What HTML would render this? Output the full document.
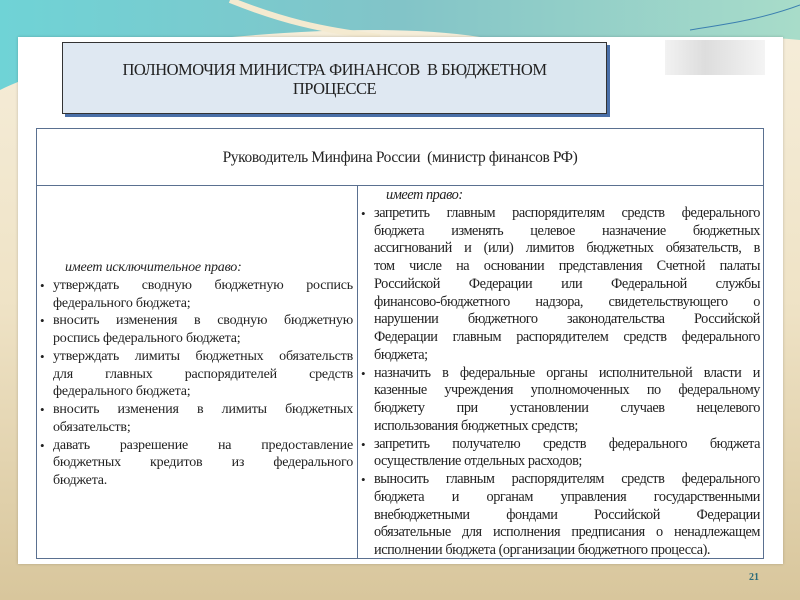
<!DOCTYPE html>
<html><head><meta charset="utf-8"><style>
*{margin:0;padding:0;box-sizing:border-box}
body{width:800px;height:600px;overflow:hidden;position:relative;font-family:"Liberation Serif",serif;color:#222;
background:linear-gradient(180deg,#f6eedb 0%,#efe3c6 50%,#d8c69c 100%);}
.panel{position:absolute;left:18px;top:37px;width:765px;height:527px;background:#fff;box-shadow:0 0 3px rgba(0,0,0,.2)}
.title{position:absolute;left:62px;top:42px;width:545px;height:72px;background:#dfe8f2;border:1px solid #333;box-shadow:3px 3px 0 #4a6fa8;text-align:center;font-size:16.5px;line-height:19px;padding-top:17px;letter-spacing:-.5px}
.logo{position:absolute;left:665px;top:40px;width:100px;height:35px;background:linear-gradient(90deg,#f2f2f2,#ddd 40%,#e8e8e8 70%,#f4f4f4)}
.tbl{position:absolute;left:36px;top:128px;width:728px;height:431px;border:1px solid #5a7090}
.hd{position:absolute;left:0;top:0;width:726px;height:57px;border-bottom:1px solid #5a7090;text-align:center;line-height:57px;font-size:15.5px;letter-spacing:-.4px}
.l{position:absolute;left:0;top:130px;width:320px;font-size:14px;letter-spacing:-.2px;padding-right:4px}
.div{position:absolute;left:320px;top:57px;width:1px;height:373px;background:#5a7090}
.r{position:absolute;left:321px;top:58px;width:405px;font-size:14.3px;letter-spacing:-.45px;padding-right:3px}
.ln{line-height:17.75px;text-align:justify;text-align-last:justify;white-space:nowrap;padding-left:16px;position:relative}
.e{text-align-last:left}
.b::before{content:"•";position:absolute;left:3px;font-size:13px}
.i{font-style:italic;padding-left:28px;text-align-last:left}
.num{position:absolute;left:749px;top:572px;font-size:10px;font-weight:bold;color:#2a6a7a}
</style></head><body>
<svg style="position:absolute;left:0;top:0" width="800" height="120">
<defs><linearGradient id="g" x1="0" x2="1"><stop offset="0" stop-color="#6fd3d6"/><stop offset=".5" stop-color="#82c4c8"/><stop offset="1" stop-color="#a8dcc9"/></linearGradient></defs>
<path d="M0 0H800V40C700 30 600 50 480 37C400 25 300 30 200 40C120 48 40 70 0 90Z" fill="url(#g)"/>
<path d="M230 0C280 20 320 30 380 37" stroke="#f4ead0" stroke-width="6" fill="none"/>
<path d="M690 30C720 25 760 20 800 5" stroke="#3b7fb0" stroke-width="1" fill="none"/>
</svg>
<div class="panel"></div>
<div class="logo"></div>
<div class="title">ПОЛНОМОЧИЯ МИНИСТРА ФИНАНСОВ&nbsp; В БЮДЖЕТНОМ<br>ПРОЦЕССЕ</div>
<div class="tbl">
<div class="hd">Руководитель Минфина России&nbsp; (министр финансов РФ)</div>
<div class="div"></div>
<div class="l">
<div class="ln i">имеет исключительное право:</div>
<div class="ln b">утверждать сводную бюджетную роспись</div>
<div class="ln e">федерального бюджета;</div>
<div class="ln b">вносить изменения в сводную бюджетную</div>
<div class="ln e">роспись федерального бюджета;</div>
<div class="ln b">утверждать лимиты бюджетных обязательств</div>
<div class="ln">для главных распорядителей средств</div>
<div class="ln e">федерального бюджета;</div>
<div class="ln b">вносить изменения в лимиты бюджетных</div>
<div class="ln e">обязательств;</div>
<div class="ln b">давать разрешение на предоставление</div>
<div class="ln">бюджетных кредитов из федерального</div>
<div class="ln e">бюджета.</div>
</div>
<div class="r">
<div class="ln i">имеет право:</div>
<div class="ln b">запретить главным распорядителям средств федерального</div>
<div class="ln">бюджета изменять целевое назначение бюджетных</div>
<div class="ln">ассигнований и (или) лимитов бюджетных обязательств, в</div>
<div class="ln">том числе на основании представления Счетной палаты</div>
<div class="ln">Российской Федерации или Федеральной службы</div>
<div class="ln">финансово-бюджетного надзора, свидетельствующего о</div>
<div class="ln">нарушении бюджетного законодательства Российской</div>
<div class="ln">Федерации главным распорядителем средств федерального</div>
<div class="ln e">бюджета;</div>
<div class="ln b">назначить в федеральные органы исполнительной власти и</div>
<div class="ln">казенные учреждения уполномоченных по федеральному</div>
<div class="ln">бюджету при установлении случаев нецелевого</div>
<div class="ln e">использования бюджетных средств;</div>
<div class="ln b">запретить получателю средств федерального бюджета</div>
<div class="ln e">осуществление отдельных расходов;</div>
<div class="ln b">выносить главным распорядителям средств федерального</div>
<div class="ln">бюджета и органам управления государственными</div>
<div class="ln">внебюджетными фондами Российской Федерации</div>
<div class="ln">обязательные для исполнения предписания о ненадлежащем</div>
<div class="ln e">исполнении бюджета (организации бюджетного процесса).</div>
</div>
</div>
<div class="num">21</div>
</body></html>
